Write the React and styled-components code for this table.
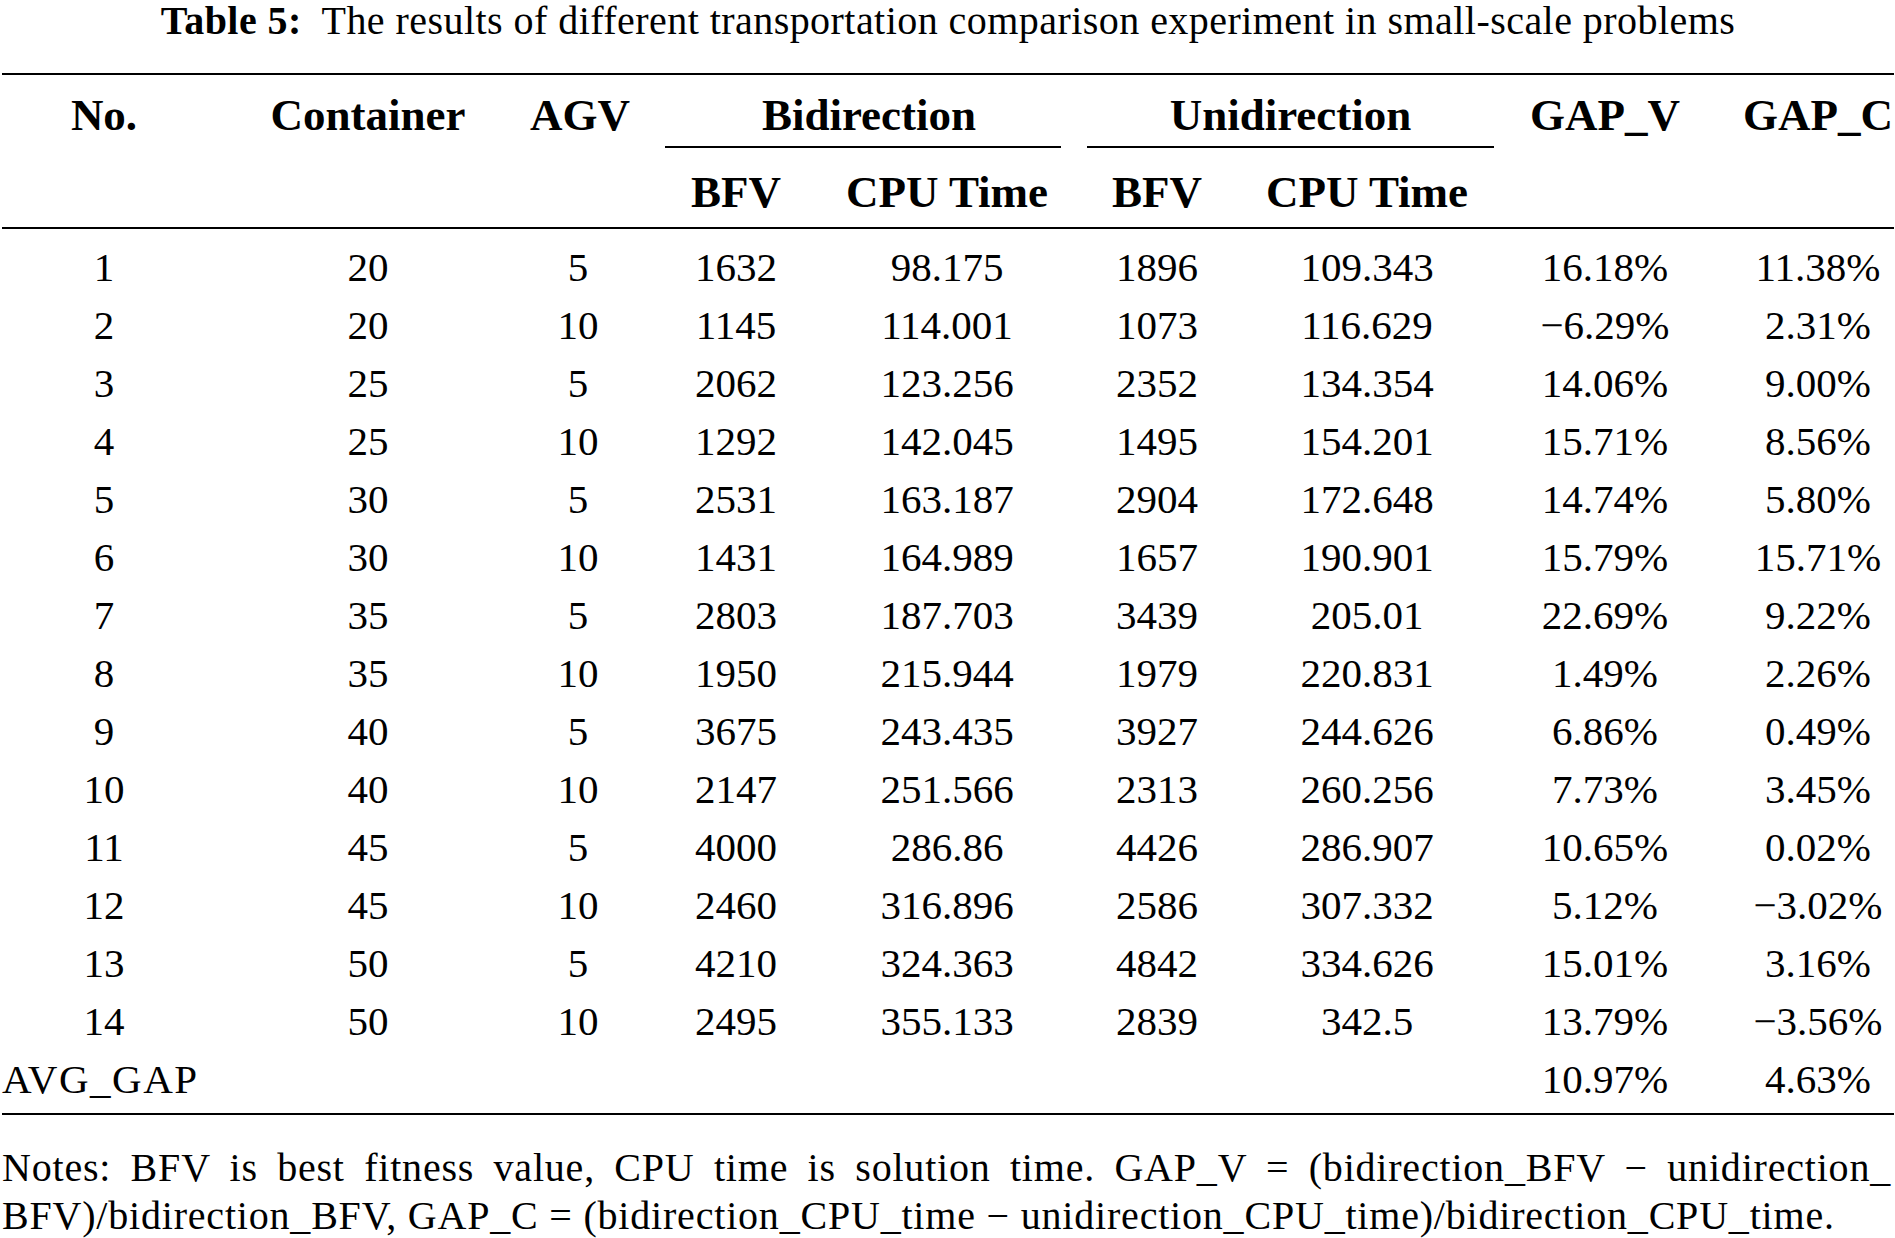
import React from "react";
import styled, { createGlobalStyle, css } from "styled-components";

const GlobalStyle = createGlobalStyle`
  html, body {
    margin: 0;
    padding: 0;
    background: #ffffff;
    overflow: hidden;
  }
`;

const COLUMNS = "204px 324px 96px 220px 202px 218px 202px 274px 152px";

const Page = styled.div`
  width: 1895px;
  box-sizing: border-box;
  padding: 0 1px 0 2px;
  font-family: "Liberation Serif", "Times New Roman", serif;
  color: #000;
`;

const Caption = styled.div`
  text-align: center;
  font-size: 40px;
  line-height: 42px;
  letter-spacing: 0.45px;
  white-space: nowrap;
`;

const CaptionLabel = styled.span`
  font-weight: bold;
  margin-right: 10px;
`;

const Table = styled.div`
  margin-top: 31px;
  border-top: 2px solid #000;
  border-bottom: 2px solid #000;
`;

const Head = styled.div`
  display: grid;
  grid-template-columns: ${COLUMNS};
  grid-template-rows: 73px 79px;
  border-bottom: 2px solid #000;
  font-weight: bold;
  font-size: 45px;
  white-space: nowrap;
`;

const HeadCell = styled.div`
  grid-row: 1 / 3;
  grid-column: ${(p) => p.$col};
  text-align: center;
  padding-top: 10px;
  line-height: 61px;
`;

const GroupCell = styled.div`
  grid-row: 1;
  grid-column: ${(p) => p.$col};
  text-align: center;
  padding-top: 10px;
  line-height: 61px;
  border-bottom: 2px solid #000;
  margin-left: ${(p) => p.$left}px;
  margin-right: ${(p) => p.$right}px;
  padding-left: ${(p) => p.$shift || 0}px;
`;

const SubCell = styled.div`
  grid-row: 2;
  grid-column: ${(p) => p.$col};
  text-align: center;
  padding-top: 10px;
  line-height: 69px;
`;

const Body = styled.div`
  padding-top: 9px;
  padding-bottom: 5px;
  font-size: 41px;
`;

const Row = styled.div`
  display: grid;
  grid-template-columns: ${COLUMNS};
  height: 58px;
  line-height: 58px;
  white-space: nowrap;
`;

const Cell = styled.div`
  text-align: center;
  ${(p) =>
    p.$label &&
    css`
      grid-column: 1 / 8;
      text-align: left;
      letter-spacing: 1.5px;
    `}
`;

const Notes = styled.div`
  margin-top: 29px;
  font-size: 40px;
  line-height: 48px;
  letter-spacing: 0.8px;
`;

const NoteLine = styled.div`
  white-space: nowrap;
  ${(p) =>
    p.$justify &&
    css`
      white-space: normal;
      text-align: justify;
      text-align-last: justify;
      margin-right: 3px;
    `}
`;

const rows = [
  ["1", "20", "5", "1632", "98.175", "1896", "109.343", "16.18%", "11.38%"],
  ["2", "20", "10", "1145", "114.001", "1073", "116.629", "\u22126.29%", "2.31%"],
  ["3", "25", "5", "2062", "123.256", "2352", "134.354", "14.06%", "9.00%"],
  ["4", "25", "10", "1292", "142.045", "1495", "154.201", "15.71%", "8.56%"],
  ["5", "30", "5", "2531", "163.187", "2904", "172.648", "14.74%", "5.80%"],
  ["6", "30", "10", "1431", "164.989", "1657", "190.901", "15.79%", "15.71%"],
  ["7", "35", "5", "2803", "187.703", "3439", "205.01", "22.69%", "9.22%"],
  ["8", "35", "10", "1950", "215.944", "1979", "220.831", "1.49%", "2.26%"],
  ["9", "40", "5", "3675", "243.435", "3927", "244.626", "6.86%", "0.49%"],
  ["10", "40", "10", "2147", "251.566", "2313", "260.256", "7.73%", "3.45%"],
  ["11", "45", "5", "4000", "286.86", "4426", "286.907", "10.65%", "0.02%"],
  ["12", "45", "10", "2460", "316.896", "2586", "307.332", "5.12%", "\u22123.02%"],
  ["13", "50", "5", "4210", "324.363", "4842", "334.626", "15.01%", "3.16%"],
  ["14", "50", "10", "2495", "355.133", "2839", "342.5", "13.79%", "\u22123.56%"],
];

export default function App() {
  return (
    <>
      <GlobalStyle />
      <Page>
        <Caption>
          <CaptionLabel>Table 5:</CaptionLabel> The results of different
          transportation comparison experiment in small-scale problems
        </Caption>
        <Table>
          <Head>
            <HeadCell $col={1}>No.</HeadCell>
            <HeadCell $col={2}>Container</HeadCell>
            <HeadCell $col={3}>AGV</HeadCell>
            <GroupCell $col="4 / 6" $left={39} $right={-13} $shift={12}>
              Bidirection
            </GroupCell>
            <GroupCell $col="6 / 8" $left={39} $right={-26}>
              Unidirection
            </GroupCell>
            <HeadCell $col={8}>GAP_V</HeadCell>
            <HeadCell $col={9}>GAP_C</HeadCell>
            <SubCell $col={4}>BFV</SubCell>
            <SubCell $col={5}>CPU Time</SubCell>
            <SubCell $col={6}>BFV</SubCell>
            <SubCell $col={7}>CPU Time</SubCell>
          </Head>
          <Body>
            {rows.map((r) => (
              <Row key={r[0]}>
                {r.map((v, i) => (
                  <Cell key={i}>{v}</Cell>
                ))}
              </Row>
            ))}
            <Row>
              <Cell $label>AVG_GAP</Cell>
              <Cell>10.97%</Cell>
              <Cell>4.63%</Cell>
            </Row>
          </Body>
        </Table>
        <Notes>
          <NoteLine $justify>
            Notes: BFV is best fitness value, CPU time is solution time. GAP_V
            = (bidirection_BFV {"\u2212"} unidirection_
          </NoteLine>
          <NoteLine>
            BFV)/bidirection_BFV, GAP_C = (bidirection_CPU_time {"\u2212"}{" "}
            unidirection_CPU_time)/bidirection_CPU_time.
          </NoteLine>
        </Notes>
      </Page>
    </>
  );
}
